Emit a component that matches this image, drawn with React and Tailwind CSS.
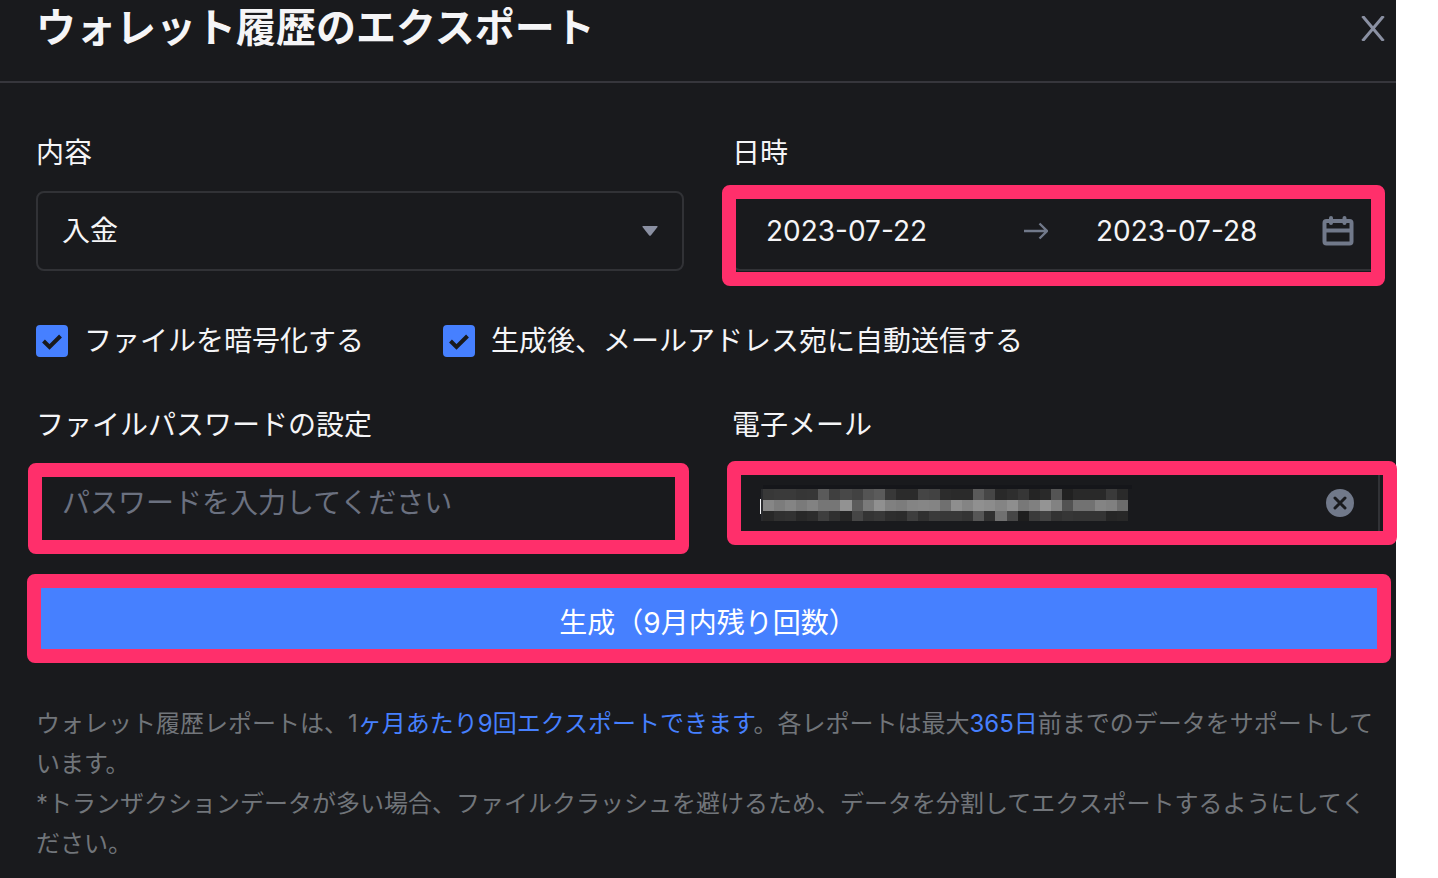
import { useState } from "react";

// Grey levels of the pixelated e-mail address, one list per row
const MOSAIC_ROWS = [
  "38 3a 3a 36 37 5a 3f 48 42 54 5b 38 2b 2b 45 42 2c 2a 2a 5a 46 29 2e 36 24 29 54 21 29 29 29 3a 2a",
  "86 7c 84 7a 82 76 76 92 5c 7a 90 80 7c 84 86 84 70 8e 84 90 8c 84 8e 78 80 94 82 52 72 72 84 80 6c",
  "28 30 32 28 2c 3e 30 26 46 34 38 2e 2c 3e 30 3a 38 38 34 56 30 70 46 1e 3a 42 32 36 34 34 34 26 28",
].map((row) => row.split(" "));

function Mosaic() {
  return (
    <svg className="pointer-events-none absolute top-5 left-[26px] h-9 w-[372px]" viewBox="0 0 372 36" shapeRendering="crispEdges" aria-hidden="true">
      <rect x="3" y="0" width="369" height="4" fill="#15161a" />
      <rect x="1" y="4" width="2" height="32" fill="#2a2b2e" />
      {MOSAIC_ROWS.map((row, y) =>
        row.map((level, x) => (
          <rect key={`${x}-${y}`} x={3 + x * 11.07} y={4 + y * 11} width="11.2" height={y === 2 ? 10 : 11} fill={`#${level}${level}${level}`} />
        )),
      )}
      <rect x="0" y="14" width="1" height="15" fill="#f5f5f7" />
    </svg>
  );
}

function Highlight({ className }) {
  return <span aria-hidden="true" className={`pointer-events-none absolute rounded-lg border-[14px] border-[#ff2f6b] ${className}`} />;
}

function Field({ id, label, children }) {
  return (
    <div className="min-w-0">
      <label htmlFor={id} className="mb-4 block leading-[44px]">
        {label}
      </label>
      <div className="relative h-20 rounded-lg border-2 border-[#313236]">{children}</div>
    </div>
  );
}

function Checkbox({ label, checked, onChange }) {
  return (
    <label className="flex items-center gap-4 leading-10">
      <span className="relative size-8">
        <input type="checkbox" checked={checked} onChange={(e) => onChange(e.target.checked)} className="block size-8 appearance-none rounded border-2 border-[#4680ff] checked:bg-[#4680ff]" />
        {checked ? (
          <svg className="pointer-events-none absolute inset-0" viewBox="0 0 32 32" fill="none" stroke="#191a1d" strokeWidth="4" aria-hidden="true">
            <path d="M7.5 16 13.5 22 24.5 11" />
          </svg>
        ) : null}
      </span>
      {label}
    </label>
  );
}

export default function App() {
  const [type, setType] = useState("deposit");
  const [start, setStart] = useState("2023-07-22");
  const [end, setEnd] = useState("2023-07-28");
  const [encrypt, setEncrypt] = useState(true);
  const [sendMail, setSendMail] = useState(true);
  const [password, setPassword] = useState("");
  const [email, setEmail] = useState("");

  return (
    <div className="min-h-screen bg-white pr-[42px]">
      <main lang="ja" className="min-h-screen bg-[#191a1d] font-['Inter','Noto_Sans_CJK_JP',sans-serif] text-[28px] text-[#f5f5f7]">
        <header className="flex items-start justify-between border-b-2 border-[#36363c] pr-[11px] pb-[25px] pl-9">
          <h1 className="text-[40px] leading-[56px] font-bold">ウォレット履歴のエクスポート</h1>
          <button type="button" aria-label="閉じる" className="mt-4">
            <svg className="h-[25px] w-6" viewBox="0 0 24 25" fill="none" stroke="#8a90a2" strokeWidth="3" aria-hidden="true">
              <path d="M1.5 0 22.5 25M22.5 0 1.5 25" />
            </svg>
          </button>
        </header>

        <form className="pt-12 pr-4 pl-9" onSubmit={(e) => e.preventDefault()}>
          <div className="grid grid-cols-2 gap-12">
            <Field id="type" label="内容">
              <select id="type" value={type} onChange={(e) => setType(e.target.value)} className="h-full w-full appearance-none bg-transparent px-6 outline-none">
                <option value="deposit">入金</option>
              </select>
              <svg className="pointer-events-none absolute top-[33px] right-6 h-[10px] w-4" viewBox="0 0 16 10" aria-hidden="true">
                <path d="M1 0h14q1 0 .5 1L9 9.200q-1 1-2 0L.5 1Q0 0 1 0Z" fill="#8a90a2" />
              </svg>
            </Field>

            <Field id="start" label="日時">
              <div className="flex h-full items-center pr-6 pl-8">
                <input id="start" type="text" value={start} onChange={(e) => setStart(e.target.value)} className="w-0 flex-1 bg-transparent outline-none" />
                <svg className="mr-12 ml-8 h-[18px] w-6" viewBox="0 0 24 18" fill="none" stroke="#71798a" strokeWidth="2.400" aria-hidden="true">
                  <path d="M0 9h23M15.500 1.500 23 9l-7.500 7.500" />
                </svg>
                <input aria-label="終了日" type="text" value={end} onChange={(e) => setEnd(e.target.value)} className="w-0 flex-1 bg-transparent outline-none" />
                <svg className="h-[30px] w-8" viewBox="0 0 32 30" fill="none" stroke="#71798a" strokeWidth="4" aria-hidden="true">
                  <rect x="2.500" y="5" width="27" height="22.500" rx="2" />
                  <path d="M3 14.500h26" />
                  <path d="M9 2v5M22.500 2v5" strokeLinecap="round" />
                </svg>
              </div>
              <Highlight className="-top-2 -right-[7px] -bottom-[17px] -left-3" />
            </Field>
          </div>

          <div className="mt-[50px] flex gap-[79px]">
            <Checkbox label="ファイルを暗号化する" checked={encrypt} onChange={setEncrypt} />
            <Checkbox label="生成後、メールアドレス宛に自動送信する" checked={sendMail} onChange={setSendMail} />
          </div>

          <div className="mt-[42px] grid grid-cols-2 gap-12">
            <Field id="password" label="ファイルパスワードの設定">
              <input id="password" type="password" value={password} onChange={(e) => setPassword(e.target.value)} placeholder="パスワードを入力してください" className="h-full w-full bg-transparent px-6 outline-none placeholder:text-[#6b7180]" />
              <Highlight className="-top-[2px] -right-[7px] -bottom-[13px] -left-[10px]" />
            </Field>

            <Field id="email" label="電子メール">
              <div className="flex h-full items-center px-6">
                <input id="email" type="email" value={email} onChange={(e) => setEmail(e.target.value)} className="w-0 flex-1 bg-transparent outline-none" />
                <button type="button" aria-label="クリア" onClick={() => setEmail("")}>
                  <svg className="size-7" viewBox="0 0 28 28" aria-hidden="true">
                    <circle cx="14" cy="14" r="14" fill="#71798a" />
                    <path d="m9 9 10 10M19 9 9 19" stroke="#191a1d" strokeWidth="3" strokeLinecap="round" />
                  </svg>
                </button>
              </div>
              <Mosaic />
              <Highlight className="-top-1 -right-[19px] -bottom-1 -left-[7px]" />
            </Field>
          </div>

          <div className="relative mt-[39px]">
            <button type="submit" className="block h-20 w-full rounded-lg bg-[#4680ff] pt-[2px] text-white">
              生成（9月内残り回数）
            </button>
            <Highlight className="-top-2 -right-[11px] -bottom-px -left-[9px]" />
          </div>

          <div className="mt-[42px] pb-3 text-2xl leading-10 text-[#71757a]">
            <p>
              ウォレット履歴レポートは、1<span className="text-[#4680ff]">ヶ月あたり9回エクスポートできます</span>。各レポートは最大<span className="text-[#4680ff]">365日</span>前までのデータをサポートしています。
            </p>
            <p>*トランザクションデータが多い場合、ファイルクラッシュを避けるため、データを分割してエクスポートするようにしてください。</p>
          </div>
        </form>
      </main>
    </div>
  );
}
